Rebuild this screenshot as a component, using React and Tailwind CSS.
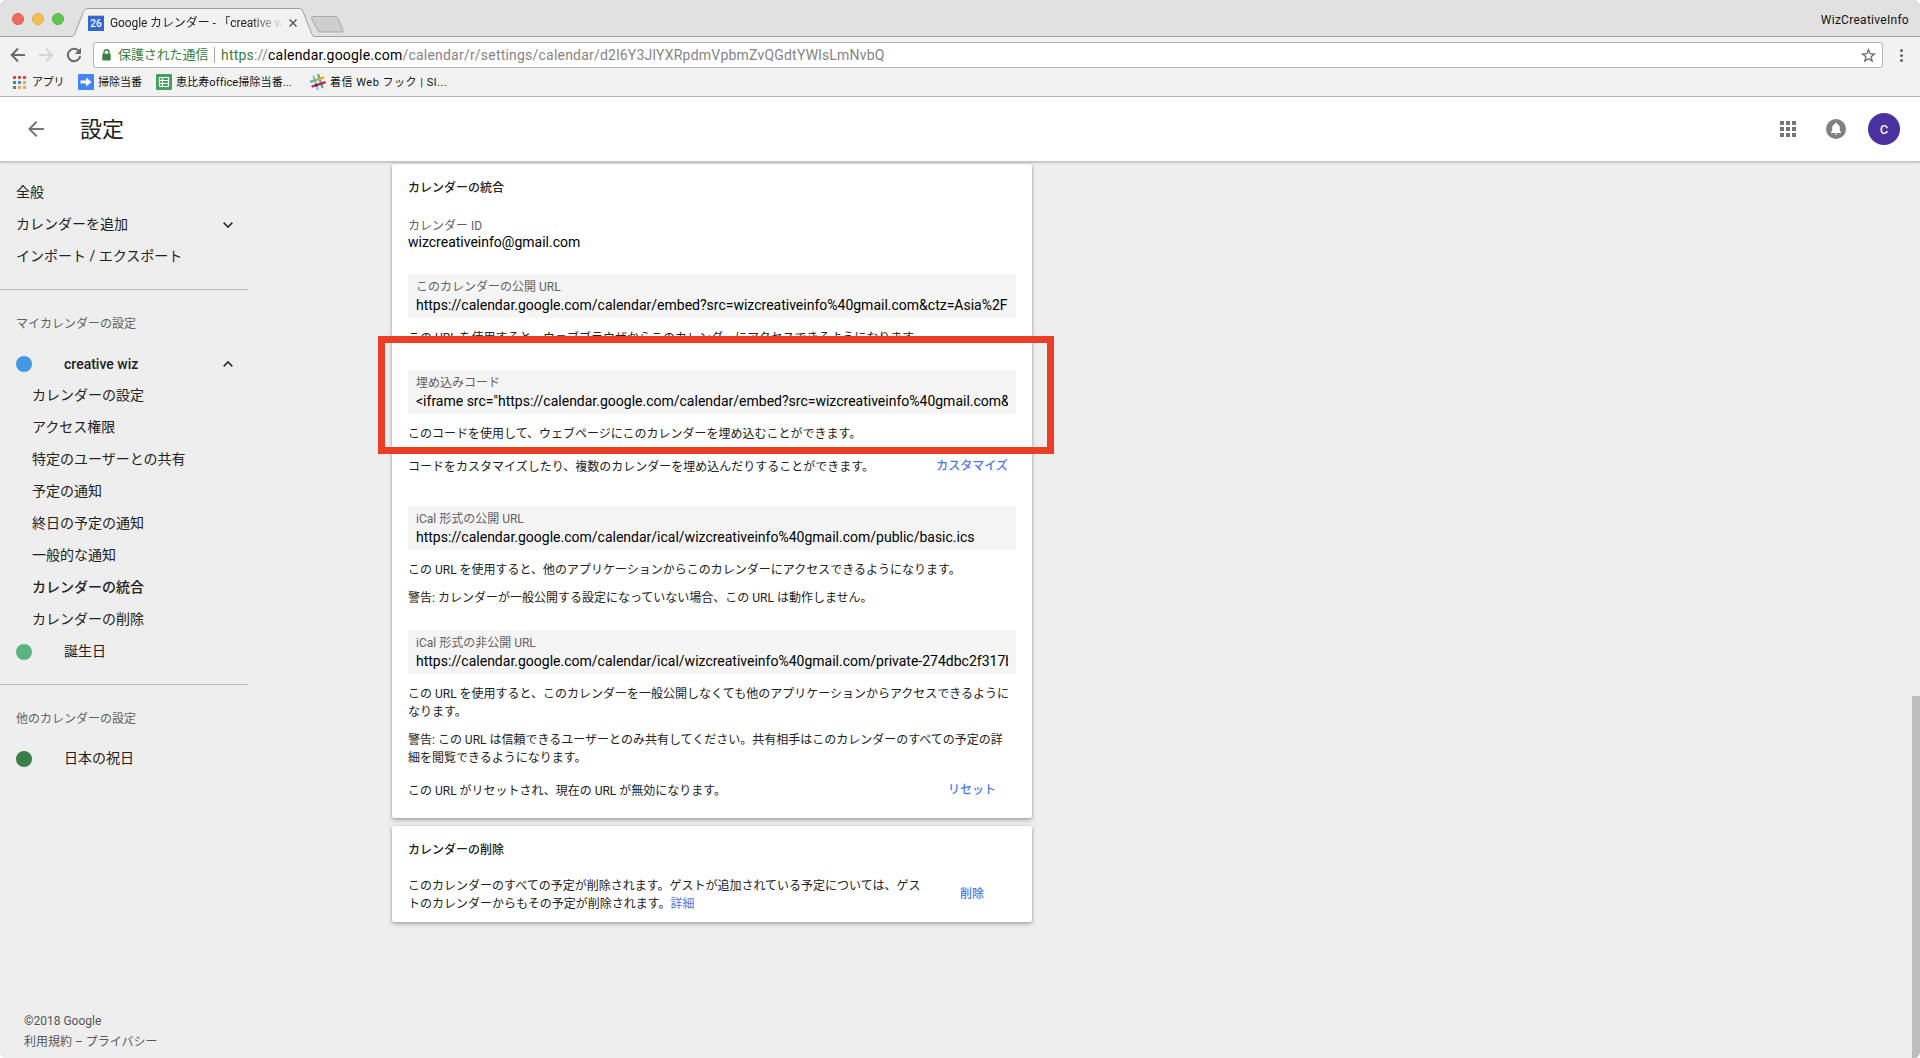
import React from "react";

function ChromeTabStrip() {
  return (
    <div className="relative flex h-[37px] items-start border-b border-[#a3a3a3] bg-[#e1e1e1]">
      <div className="flex w-[72px] gap-2 pt-[13px] pl-3">
        <span className="h-3 w-3 rounded-full border border-[#e0564a] bg-[#ed6b60]" />
        <span className="h-3 w-3 rounded-full border border-[#e3ab3e] bg-[#f5bf4f]" />
        <span className="h-3 w-3 rounded-full border border-[#55b344] bg-[#61c554]" />
      </div>
      <div className="relative h-[37px] w-[242px] shrink-0">
        <svg className="absolute inset-0" width="242" height="37" viewBox="0 0 242 37">
          <path d="M0 36.500 C2 36 2.500 34.500 3.500 32 L11.500 11.500 Q12.700 8.500 15 8.500 H227.500 Q229.800 8.500 231 11.500 L239 32 C240 34.500 240.500 36 242 36.500 V37 H0 Z" fill="#f2f2f2" />
          <path d="M0 36.500 C2 36 2.500 34.500 3.500 32 L11.500 11.500 Q12.700 8.500 15 8.500 H227.500 Q229.800 8.500 231 11.500 L239 32 C240 34.500 240.500 36 242 36.500" fill="none" stroke="#9f9f9f" />
        </svg>
        <div className="relative flex h-[30px] items-center pt-2 pl-4">
          <span className="mt-2 flex h-4 w-4 shrink-0 items-center justify-center border-t border-[#c6c6c6] bg-[#3367d6] text-[10px] leading-[14px] font-medium text-white">26</span>
          <span className="mt-2 ml-[6px] w-[175px] overflow-hidden text-[12px] leading-4 tracking-[-0.11px] whitespace-nowrap text-[#222] [mask-image:linear-gradient(to_right,black_140px,transparent_173px)]">
            Google カレンダー - 「creative wiz
          </span>
          <svg className="mt-2 ml-[4px] shrink-0" width="8" height="8" viewBox="0 0 8 8">
            <path d="M0.500 0.500 L7.500 7.500 M7.500 0.500 L0.500 7.500" stroke="#5a5a5a" strokeWidth="1.500" />
          </svg>
        </div>
      </div>
      <svg className="-ml-1 mt-[15px]" width="35" height="19" viewBox="0 0 35 19">
        <path d="M3 1.500 H25 Q27 1.500 28 3.500 L33 15 Q33.700 17 32 17 H10 Q8.500 17 7.500 15 L1.600 3.500 Q1 1.500 3 1.500 Z" fill="#cecece" stroke="#a9a9a9" />
      </svg>
      <span className="mt-[12px] mr-[11px] ml-auto text-[12px] leading-4 tracking-[0.28px] text-[#111]">WizCreativeInfo</span>
    </div>
  );
}

function ChromeToolbar() {
  return (
    <div className="flex h-9 items-center bg-[#f2f2f2] text-[13px]">
      <svg className="ml-[10px]" width="16" height="16" viewBox="0 0 16 16" fill="none" stroke="#6b6b6b" strokeWidth="2">
        <path d="M15 8 H2 M8 1.500 L1.700 8 L8 14.500" />
      </svg>
      <svg className="ml-[12px]" width="16" height="16" viewBox="0 0 16 16" fill="none" stroke="#d6d6d6" strokeWidth="2">
        <path d="M1 8 H14 M8 1.500 L14.300 8 L8 14.500" />
      </svg>
      <svg className="ml-[12px]" width="16" height="16" viewBox="0 0 16 16">
        <path d="M13 4.300 A6.200 6.200 0 1 0 14.200 9" fill="none" stroke="#6b6b6b" strokeWidth="2" />
        <path d="M15 0.800 V7 H8.800 Z" fill="#6b6b6b" />
      </svg>
      <div className="ml-[11px] flex h-[26px] w-[1790px] items-center rounded-[3px] border border-[#b3b3b3] bg-white">
        <svg className="ml-2" width="9" height="12" viewBox="0 0 9 12">
          <path d="M2 6 V3.300 A2.500 2.500 0 0 1 7 3.300 V6" fill="none" stroke="#37803f" strokeWidth="1.400" />
          <rect x="0.300" y="4.800" width="8.400" height="6.700" rx="0.800" fill="#37803f" />
        </svg>
        <span className="ml-[7px] w-[90px] text-[13px] tracking-[-0.1px] whitespace-nowrap text-[#37803f]">保護された通信</span>
        <span className="ml-[6px] h-4 w-px bg-[#a6a6a6]" />
        <span className="ml-[6px] text-[14px] tracking-[0.21px] whitespace-nowrap text-[#858585]">
          <span className="text-[#37803f]">https</span>://<span className="text-black">calendar.google.com</span>/calendar/r/settings/calendar/d2l6Y3JlYXRpdmVpbmZvQGdtYWlsLmNvbQ
        </span>
        <svg className="mr-[6px] ml-auto" width="15" height="15" viewBox="0 0 15 15">
          <path d="M7.500 1.800 L9.100 5.700 L13.400 6 L10.100 8.800 L11.200 13 L7.500 10.700 L3.800 13 L4.900 8.800 L1.600 6 L5.900 5.700 Z" fill="none" stroke="#6b6b6b" strokeWidth="1.300" />
        </svg>
      </div>
      <div className="ml-[17px] flex flex-col gap-[2px]">
        <span className="h-[3px] w-[3px] rounded-full bg-[#666]" />
        <span className="h-[3px] w-[3px] rounded-full bg-[#666]" />
        <span className="h-[3px] w-[3px] rounded-full bg-[#666]" />
      </div>
    </div>
  );
}

const appDots = [
  "bg-[#dd4b3e]", "bg-[#dd4b3e]", "bg-[#dd4b3e]",
  "bg-[#3f9a57]", "bg-[#4a86ee]", "bg-[#eda93c]",
  "bg-[#3f9a57]", "bg-[#eda93c]", "bg-[#eda93c]",
];

function BookmarksBar() {
  return (
    <div className="flex h-6 items-center border-b border-[#b6b6b6] bg-[#f2f2f2] pb-[5px] text-[11px] leading-4 whitespace-nowrap text-[#111]">
      <span className="ml-[13px] grid grid-cols-[3px_3px_3px] gap-[2px]">
        {appDots.map((c, i) => (
          <span key={i} className={"h-[3px] w-[3px] " + c} />
        ))}
      </span>
      <span className="ml-[6px] w-[46px] pt-[2px] tracking-[-0.2px]">アプリ</span>
      <svg width="16" height="16" viewBox="0 0 16 16">
        <rect width="16" height="16" rx="1" fill="#4285f4" />
        <path d="M2.500 6.500 H8 V3.500 L13.500 8 L8 12.500 V9.500 H2.500 Z" fill="#fff" />
      </svg>
      <span className="ml-1 w-[58px] pt-[2px]">掃除当番</span>
      <svg width="16" height="16" viewBox="0 0 16 16">
        <rect width="16" height="16" rx="1" fill="#43a05a" />
        <path d="M3.500 3.500 H12.500 V12.500 H3.500 Z M3.500 6.500 H12.500 M3.500 9.500 H12.500 M6.500 3.500 V12.500" fill="none" stroke="#fff" strokeWidth="1.200" />
      </svg>
      <span className="ml-1 w-[134px] pt-[2px] tracking-[0.12px]">恵比寿office掃除当番...</span>
      <svg width="16" height="16" viewBox="0 0 16 16" strokeWidth="2.300" strokeLinecap="round" fill="none">
        <g transform="rotate(-18 8 8)">
          <path d="M5.500 1.500 V14.500" stroke="#6ecadc" />
          <path d="M10.500 1.500 V14.500" stroke="#3eb890" />
          <path d="M1.500 5.500 H14.500" stroke="#e9a820" />
          <path d="M1.500 5.500 H6" stroke="#5bb7a8" />
          <path d="M1.500 10.500 H14.500" stroke="#e01563" />
          <path d="M5.500 10.500 h0.010" stroke="#3a1d38" />
          <path d="M10.500 10.500 h0.010" stroke="#b8402a" />
        </g>
      </svg>
      <span className="ml-1 pt-[2px] tracking-[0.5px]">着信 Web フック | Sl...</span>
    </div>
  );
}

function AppHeader() {
  return (
    <header className="relative z-10 flex h-[65px] shrink-0 items-center border-b border-[#c4c4c4] bg-white shadow-[0_1px_2px_rgba(0,0,0,0.18)]">
      <svg className="ml-6" width="24" height="24" viewBox="0 0 24 24" fill="#757575">
        <path d="M20 11H7.830l5.590-5.590L12 4l-8 8 8 8 1.410-1.410L7.830 13H20v-2z" />
      </svg>
      <h1 className="ml-[32px] pt-[2px] text-[22px] leading-6 text-[#212121]">設定</h1>
      <svg className="ml-auto" width="24" height="24" viewBox="0 0 24 24" fill="#757575">
        <path d="M4 8h4V4H4v4zm6 12h4v-4h-4v4zm-6 0h4v-4H4v4zm0-6h4v-4H4v4zm6 0h4v-4h-4v4zm6-10v4h4V4h-4zm-6 4h4V4h-4v4zm6 6h4v-4h-4v4zm0 6h4v-4h-4v4z" />
      </svg>
      <svg className="ml-[26px]" width="20" height="20" viewBox="0 0 20 20">
        <circle cx="10" cy="10" r="10" fill="#808080" />
        <path d="M5 14 V13 L6.200 11.800 V8.600 C6.200 6.500 7.500 5.200 9.100 4.900 V4.300 A0.900 0.900 0 0 1 10.900 4.300 V4.900 C12.500 5.200 13.800 6.500 13.800 8.600 V11.800 L15 13 V14 Z M8.900 14.800 H11.100 A1.100 1.100 0 0 1 8.900 14.800 Z" fill="#fff" />
      </svg>
      <div className="mr-5 ml-[22px] flex h-8 w-8 items-center justify-center rounded-full bg-[#4a319f] pb-px text-[16px] leading-8 text-white">c</div>
    </header>
  );
}

function Chevron({ up }) {
  return (
    <svg className="mr-[15px] ml-auto" width="10" height="8" viewBox="0 0 10 8" fill="none" stroke="#303030" strokeWidth="1.700">
      <path d={up ? "M0.700 6.300 L5 2 L9.300 6.300" : "M0.700 1.700 L5 6 L9.300 1.700"} />
    </svg>
  );
}

const subItems = [
  "カレンダーの設定",
  "アクセス権限",
  "特定のユーザーとの共有",
  "予定の通知",
  "終日の予定の通知",
  "一般的な通知",
  "カレンダーの統合",
  "カレンダーの削除",
];

function Sidebar() {
  return (
    <nav className="flex w-[248px] shrink-0 flex-col pt-[15px] text-[14px] text-[#212121]">
      <div className="flex h-8 items-center pb-[2px] pl-4">全般</div>
      <div className="flex h-8 items-center pl-4"><span className="pb-[2px]">カレンダーを追加</span><Chevron /></div>
      <div className="flex h-8 items-center pb-[2px] pl-4">インポート / エクスポート</div>
      <div className="mt-4 h-px bg-[#bdbdbd]" />
      <div className="mt-[26px] h-4 pl-4 text-[12px] leading-4 text-[#616161]">マイカレンダーの設定</div>
      <div className="mt-[16px] flex h-8 items-center pl-4 font-medium">
        <span className="mr-8 h-4 w-4 rounded-full bg-[#4299e1]" />
        creative wiz
        <Chevron up />
      </div>
      {subItems.map((t) => (
        <div key={t} className={t === "カレンダーの統合" ? "flex h-8 items-center pb-[2px] pl-8 font-medium" : "flex h-8 items-center pb-[2px] pl-8"}>{t}</div>
      ))}
      <div className="flex h-8 items-center pl-4">
        <span className="mr-8 h-4 w-4 rounded-full bg-[#5cb37f]" /><span className="pb-[2px]">誕生日</span>
      </div>
      <div className="mt-4 h-px bg-[#bdbdbd]" />
      <div className="mt-[26px] h-4 pl-4 text-[12px] leading-4 text-[#616161]">他のカレンダーの設定</div>
      <div className="mt-[16px] flex h-8 items-center pl-4">
        <span className="mr-8 h-4 w-4 rounded-full bg-[#3a7f47]" /><span className="pb-[2px]">日本の祝日</span>
      </div>
      <footer className="mt-auto pb-[6px] pl-6 text-[12px] leading-[20px] text-[#555]">
        <div className="mb-px">©2018 Google</div>
        <div>利用規約 – プライバシー</div>
      </footer>
    </nav>
  );
}

function Field({ label, value, className }) {
  return (
    <div className={"h-11 rounded-[2px] bg-[#f5f5f5] px-2 pt-[5px] " + className}>
      <div className="text-[12px] leading-[17px] text-[#616161]">{label}</div>
      <div className="overflow-hidden text-[14px] leading-[18px] whitespace-nowrap text-black">{value}</div>
    </div>
  );
}

function Action({ children }) {
  return <span className="w-[88px] shrink-0 pb-[2px] text-center font-medium text-[#4a78ee]">{children}</span>;
}

function IntegrationCard() {
  return (
    <section className="relative h-[654px] w-[640px] rounded-[2px] bg-white px-4 pt-[15px] text-[12px] leading-[18px] whitespace-nowrap text-[#212121] shadow-[0_2px_4px_rgba(0,0,0,0.3),0_0_2px_rgba(0,0,0,0.15)]">
      <h2 className="font-medium">カレンダーの統合</h2>
      <div className="mt-[21px] leading-4 text-[#616161]">カレンダー ID</div>
      <div className="text-[14px] leading-4 text-black">wizcreativeinfo@gmail.com</div>
      <Field className="mt-6" label="このカレンダーの公開 URL" value="https://calendar.google.com/calendar/embed?src=wizcreativeinfo%40gmail.com&ctz=Asia%2F" />
      <p className="mt-[11px]">この URL を使用すると、ウェブブラウザからこのカレンダーにアクセスできるようになります。</p>
      <Field className="mt-[23px]" label="埋め込みコード" value={'<iframe src="https://calendar.google.com/calendar/embed?src=wizcreativeinfo%40gmail.com&'} />
      <p className="mt-[11px]">このコードを使用して、ウェブページにこのカレンダーを埋め込むことができます。</p>
      <div className="mt-[14px] flex items-center justify-between">
        <p>コードをカスタマイズしたり、複数のカレンダーを埋め込んだりすることができます。</p>
        <Action>カスタマイズ</Action>
      </div>
      <Field className="mt-[29px]" label="iCal 形式の公開 URL" value="https://calendar.google.com/calendar/ical/wizcreativeinfo%40gmail.com/public/basic.ics" />
      <p className="mt-[11px]">この URL を使用すると、他のアプリケーションからこのカレンダーにアクセスできるようになります。</p>
      <p className="mt-[10px]">警告: カレンダーが一般公開する設定になっていない場合、この URL は動作しません。</p>
      <Field className="mt-[23px]" label="iCal 形式の非公開 URL" value="https://calendar.google.com/calendar/ical/wizcreativeinfo%40gmail.com/private-274dbc2f317b" />
      <p className="mt-[11px]">この URL を使用すると、このカレンダーを一般公開しなくても他のアプリケーションからアクセスできるように<br />なります。</p>
      <p className="mt-[10px]">警告: この URL は信頼できるユーザーとのみ共有してください。共有相手はこのカレンダーのすべての予定の詳<br />細を閲覧できるようになります。</p>
      <div className="mt-[14px] flex items-center justify-between">
        <p>この URL がリセットされ、現在の URL が無効になります。</p>
        <Action>リセット</Action>
      </div>
      <div className="absolute top-[172px] left-[-14px] h-[118px] w-[676px] border-[7px] border-[#eb3e26]" />
    </section>
  );
}

function DeleteCard() {
  return (
    <section className="mt-2 h-24 w-[640px] rounded-[2px] bg-white px-4 pt-[15px] text-[12px] leading-[18px] whitespace-nowrap text-[#212121] shadow-[0_2px_4px_rgba(0,0,0,0.3),0_0_2px_rgba(0,0,0,0.15)]">
      <h2 className="font-medium">カレンダーの削除</h2>
      <div className="mt-[18px] flex items-center justify-between">
        <p>
          このカレンダーのすべての予定が削除されます。ゲストが追加されている予定については、ゲス<br />
          トのカレンダーからもその予定が削除されます。<span className="text-[#4a78ee]">詳細</span>
        </p>
        <Action>削除</Action>
      </div>
    </section>
  );
}

export default function App() {
  return (
    <div className="h-[1058px] w-[1920px] bg-white">
      <div className="flex h-full flex-col overflow-hidden rounded-[6px] bg-[#eeeeee] [font-family:Roboto,'Noto_Sans_CJK_JP',sans-serif]">
        <ChromeTabStrip />
        <ChromeToolbar />
        <BookmarksBar />
        <AppHeader />
        <div className="flex min-h-0 grow">
          <Sidebar />
          <main className="ml-36 pt-[2px]">
            <IntegrationCard />
            <DeleteCard />
          </main>
          <div className="ml-auto h-full w-2 pt-[534px]">
            <div className="h-full bg-[#bdbdbd]" />
          </div>
        </div>
      </div>
    </div>
  );
}
